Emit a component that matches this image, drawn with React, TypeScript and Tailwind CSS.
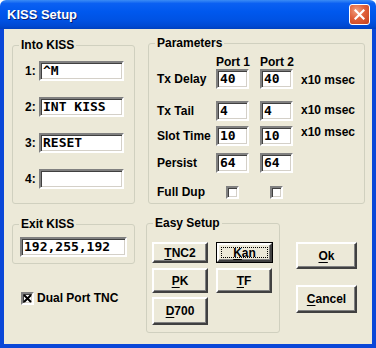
import type { ReactNode } from 'react';

const sunken =
    'bg-white border-2 border-t-[#808080] border-l-[#808080] border-b-white border-r-white shadow-[inset_1px_1px_0_#404040,inset_-1px_-1px_0_#D4D0C8]';

const raised =
    'bg-[#ECE9D8] border-2 border-t-white border-l-white border-b-[#404040] border-r-[#404040] shadow-[inset_-1px_-1px_0_#808080]';

function Field({ value, className = '' }: { value: string; className?: string }) {
    return (
        <div className={`${sunken} h-[20px] pl-[2px] flex items-center whitespace-pre font-['DejaVu_Sans_Mono',monospace] font-bold text-[13px] text-black ${className}`}>
            {value}
        </div>
    );
}

function Check({ checked = false }: { checked?: boolean }) {
    return (
        <div className={`${sunken} w-[13px] h-[13px] flex items-center justify-center`}>
            {checked && (
                <svg width="9" height="9" viewBox="0 0 9 9">
                    <path d="M1 1L8 8M8 1L1 8" stroke="#000" strokeWidth="2" />
                </svg>
            )}
        </div>
    );
}

// group box; padding goes on the inner div so the legend stays put
function Group({ title, className = '', inner = '', children }: { title: string; className?: string; inner?: string; children: ReactNode }) {
    return (
        <fieldset className={`border border-[#D0D0BF] rounded-[3px] ${className}`}>
            <legend className="ml-[6px] px-[2px] leading-[14px]">{title}</legend>
            <div className={inner}>{children}</div>
        </fieldset>
    );
}

function Btn({ label, hot, className = '', isDefault = false }: { label: string; hot: number; className?: string; isDefault?: boolean }) {
    const text = (
        <span>
            {label.slice(0, hot)}
            <span className="underline underline-offset-[2px]">{label[hot]}</span>
            {label.slice(hot + 1)}
        </span>
    );
    if (isDefault) {
        return (
            <div className={`border border-black flex ${className}`}>
                <div className={`${raised} flex-1 flex p-[2px]`}>
                    <div className="flex-1 border border-dotted border-black flex items-center justify-center">{text}</div>
                </div>
            </div>
        );
    }
    return <div className={`${raised} flex items-center justify-center ${className}`}>{text}</div>;
}

export default function App() {
    const params = [
        { name: 'Tx Delay', p1: '40', p2: '40', msec: 'mt-[2px]', row: 'mt-0' },
        { name: 'Tx Tail', p1: '4', p2: '4', msec: '-mt-[2px]', row: 'mt-[12px]' },
        { name: 'Slot Time', p1: '10', p2: '10', msec: '-mt-[9px]', row: 'mt-[5px]' },
        { name: 'Persist', p1: '64', p2: '64', msec: '', row: 'mt-[7px]' },
    ];

    return (
        <div className="w-[376px] h-[348px] flex flex-col font-['Liberation_Sans',Arial,sans-serif] font-bold text-[12px] text-black select-none">
            {/* title bar */}
            <div className="h-[29px] flex items-center justify-between pl-[7px] pr-[6px] rounded-t-[6px] bg-[linear-gradient(to_bottom,#3B8CF5_0%,#0B60F2_12%,#0058EE_40%,#0052E3_70%,#0049D2_90%,#0040BE_100%)]">
                <span className="text-white text-[13px] [text-shadow:1px_1px_0_#0A1E6E]">KISS Setup</span>
                <div className="w-[21px] h-[21px] rounded-[3px] border border-white bg-[radial-gradient(circle_at_35%_30%,#F0A080_0%,#E0603A_45%,#C4401C_100%)] flex items-center justify-center">
                    <svg width="11" height="11" viewBox="0 0 11 11">
                        <path d="M1.5 1.5L9.5 9.5M9.5 1.5L1.5 9.5" stroke="#fff" strokeWidth="2.2" strokeLinecap="square" />
                    </svg>
                </div>
            </div>

            {/* body */}
            <div className="flex-1 bg-[#ECE9D8] border-x-4 border-b-4 border-[#0A47D8] flex items-start gap-[13px] pl-[8px]">
                {/* left column */}
                <div className="w-[123px] flex flex-col">
                    <Group title="Into KISS" className="mt-[9px]" inner="pl-[12px] pt-[9px] pb-[14px] flex flex-col gap-[16px]">
                        {['^M', 'INT KISS', 'RESET', ''].map((v, i) => (
                            <div key={i} className="flex items-center">
                                <span className="w-[14px]">{i + 1}:</span>
                                <Field value={v} className="w-[85px]" />
                            </div>
                        ))}
                    </Group>

                    <Group title="Exit KISS" className="mt-[13px]" inner="pl-[7px] pt-[6px] pb-[6px]">
                        <Field value="192,255,192" className="w-[107px] pl-[1px]" />
                    </Group>

                    <div className="mt-[27px] ml-[9px] flex items-center gap-[3px] h-[14px]">
                        <Check checked />
                        <span>Dual Port TNC</span>
                    </div>
                </div>

                {/* right column */}
                <div className="flex flex-col">
                    <Group title="Parameters" className="mt-[7px] w-[217px]" inner="pl-[8px] pt-[5px] pb-[1px]">
                        <div className="flex h-[14px] leading-[14px]">
                            <span className="w-[59px]" />
                            <span className="w-[44px]">Port 1</span>
                            <span>Port 2</span>
                        </div>
                        {params.map((p) => (
                            <div key={p.name} className={`flex items-center h-[20px] ${p.row}`}>
                                <span className="w-[59px]">{p.name}</span>
                                <Field value={p.p1} className="w-[33px]" />
                                <Field value={p.p2} className="w-[33px] ml-[11px]" />
                                {p.name !== 'Persist' && (
                                    <span className={`ml-[8px] self-center ${p.msec}`}>x10 msec</span>
                                )}
                            </div>
                        ))}
                        <div className="flex items-center h-[20px] mt-[9px]">
                            <span className="w-[59px]">Full Dup</span>
                            <div className="w-[33px] flex justify-center">
                                <Check />
                            </div>
                            <div className="w-[33px] ml-[11px] flex justify-center">
                                <Check />
                            </div>
                        </div>
                    </Group>

                    <div className="flex items-start">
                        <Group title="Easy Setup" className="mt-[12px] -ml-[2px] w-[134px]" inner="pl-[5px] pt-[12px] pb-[7px]">
                            <div className="flex gap-[8px]">
                                <Btn label="TNC2" hot={0} className="w-[56px] h-[21px]" />
                                <Btn label="Kan" hot={0} isDefault className="w-[57px] h-[21px]" />
                            </div>
                            <div className="flex gap-[8px] mt-[5px]">
                                <Btn label="PK" hot={0} className="w-[56px] h-[25px]" />
                                <Btn label="TF" hot={0} className="w-[56px] h-[25px]" />
                            </div>
                            <div className="flex mt-[4px]">
                                <Btn label="D700" hot={0} className="w-[56px] h-[28px]" />
                            </div>
                        </Group>

                        <div className="ml-[16px] mt-[38px] flex flex-col">
                            <Btn label="Ok" hot={0} className="w-[61px] h-[27px]" />
                            <Btn label="Cancel" hot={0} className="w-[61px] h-[28px] mt-[16px]" />
                        </div>
                    </div>
                </div>
            </div>
        </div>
    );
}
